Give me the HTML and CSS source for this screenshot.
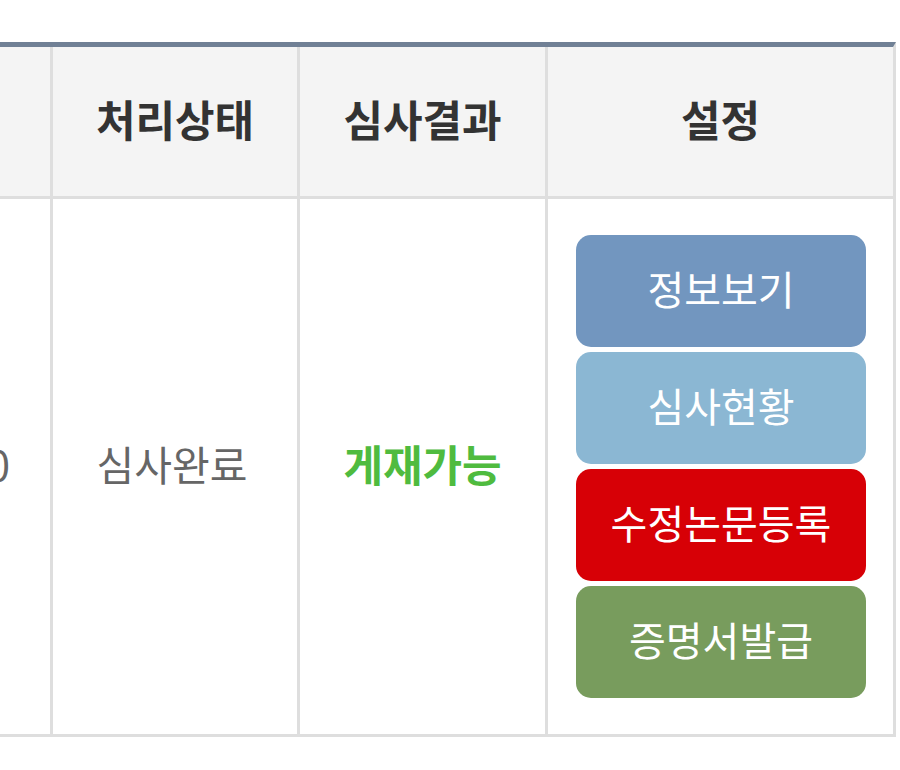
FILE: index.html
```html
<!DOCTYPE html>
<html lang="ko">
<head>
<meta charset="utf-8">
<title>심사 현황</title>
<link rel="stylesheet" href="styles.css">
</head>
<body>
<div class="wrap">
  <div class="grid">
    <div class="cell head"></div>
    <div class="cell head">처리상태</div>
    <div class="cell head">심사결과</div>
    <div class="cell head">설정</div>

    <div class="cell body first">2020.10.10</div>
    <div class="cell body status">심사완료</div>
    <div class="cell body result">게재가능</div>
    <div class="cell body actions">
      <a class="btn btn-info" href="#">정보보기</a>
      <a class="btn btn-status" href="#">심사현황</a>
      <a class="btn btn-revise" href="#">수정논문등록</a>
      <a class="btn btn-cert" href="#">증명서발급</a>
    </div>
  </div>
</div>
</body>
</html>
```

FILE: styles.css
```css
html, body {
  margin: 0;
  padding: 0;
  background: #ffffff;
}

body {
  font-family: "Noto Sans CJK KR", "Noto Sans", sans-serif;
  color: #666666;
}

.wrap {
  width: 900px;
  height: 770px;
  overflow: hidden;
  padding-top: 42px;
  box-sizing: border-box;
}

.grid {
  display: grid;
  grid-template-columns: 250px 244px 245px 345px;
  grid-template-rows: 149px 535px;
  gap: 3px;
  background: #dedede;
  border: 3px solid #dedede;
  border-top: 5px solid #708095;
  margin-left: -203px;
  width: max-content;
}

.cell {
  display: flex;
  align-items: center;
  justify-content: center;
  background: #ffffff;
  white-space: nowrap;
  box-sizing: border-box;
}

.head {
  background: #f4f4f4;
  color: #333333;
  font-weight: 700;
  font-size: 43px;
  padding-bottom: 8px;
}

.body {
  font-size: 41px;
  color: #666666;
  padding-bottom: 8px;
}

.first {
  justify-content: flex-end;
  padding-right: 40px;
}

.status {
  padding-right: 6px;
}

.result {
  color: #4fbb3f;
  font-weight: 700;
  font-size: 43px;
}

.actions {
  flex-direction: column;
  gap: 5px;
  padding: 0 27px 0 28px;
}

.btn {
  display: flex;
  align-items: center;
  justify-content: center;
  width: 100%;
  height: 112px;
  flex: none;
  border-radius: 15px;
  color: #ffffff;
  text-decoration: none;
  font-size: 40px;
  padding-bottom: 7px;
  box-sizing: border-box;
}

.btn-info { background: #7296bf; }
.btn-status { background: #8bb7d3; }
.btn-revise { background: #d70006; }
.btn-cert { background: #789c5d; }
```
